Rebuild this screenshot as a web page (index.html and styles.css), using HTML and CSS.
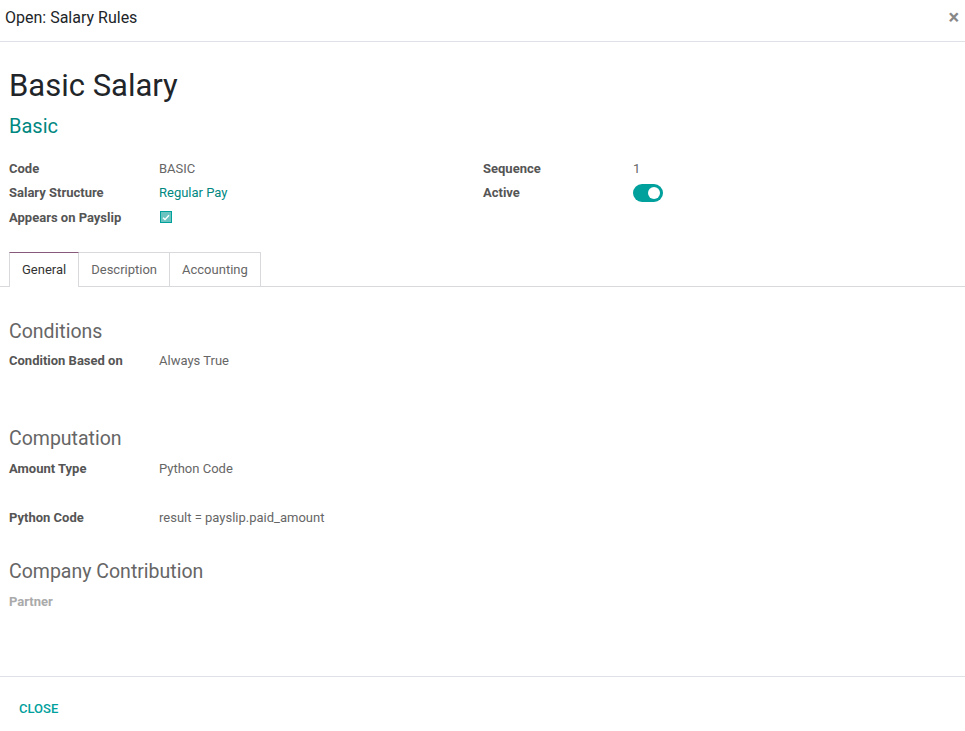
FILE: index.html
```html
<!DOCTYPE html>
<html>
<head>
<meta charset="utf-8">
<link rel="stylesheet" href="styles.css">
</head>
<body>
<div class="modal">
  <header class="modal-header">
    <h4 class="modal-title">Open: Salary Rules</h4>
    <span class="close">×</span>
  </header>
  <main class="modal-body">
    <h1 class="title">Basic Salary</h1>
    <div class="subtitle">Basic</div>
    <div class="groups">
      <div class="group">
        <div class="row"><span class="label">Code</span><span class="value">BASIC</span></div>
        <div class="row"><span class="label">Salary Structure</span><span class="value link">Regular Pay</span></div>
        <div class="row"><span class="label">Appears on Payslip</span><span class="value"><span class="checkbox"><svg width="8" height="7" viewBox="0 0 8 7"><path d="M1 3.8 L3 5.6 L7 1.2" fill="none" stroke="#fff" stroke-width="1.4"/></svg></span></span></div>
      </div>
      <div class="group">
        <div class="row"><span class="label">Sequence</span><span class="value">1</span></div>
        <div class="row"><span class="label">Active</span><span class="value"><span class="toggle"><span class="knob"></span></span></span></div>
      </div>
    </div>
    <nav class="tabs">
      <span class="tab active">General</span>
      <span class="tab">Description</span>
      <span class="tab">Accounting</span>
    </nav>
    <section class="section">
      <h2 class="section-title">Conditions</h2>
      <div class="row"><span class="label">Condition Based on</span><span class="value">Always True</span></div>
    </section>
    <section class="section s-comp">
      <h2 class="section-title">Computation</h2>
      <div class="row"><span class="label">Amount Type</span><span class="value">Python Code</span></div>
      <div class="row r-code"><span class="label">Python Code</span><span class="value">result = payslip.paid_amount</span></div>
    </section>
    <section class="section s-contrib">
      <h2 class="section-title">Company Contribution</h2>
      <div class="row"><span class="label muted">Partner</span><span class="value"></span></div>
    </section>
  </main>
  <footer class="modal-footer">
    <span class="btn-close">CLOSE</span>
  </footer>
</div>
</body>
</html>
```
FILE: styles.css
```css
html, body {
  margin: 0;
  padding: 0;
  background: #fff;
  font-family: Roboto, "Noto Sans", sans-serif;
  color: #666;
}
.modal {
  width: 965px;
  height: 731px;
  display: flex;
  flex-direction: column;
}
.modal-header {
  height: 42px;
  border-bottom: 1px solid #dee2e6;
  display: flex;
  align-items: center;
  justify-content: space-between;
  padding: 0 6px 0 5px;
  box-sizing: border-box;
}
.modal-title {
  margin: 0;
  font-size: 16px;
  font-weight: 400;
  color: #212529;
  position: relative;
  top: -3px;
}
.close {
  font-size: 20px;
  font-weight: 700;
  color: #888;
  position: relative;
  top: -4px;
}
.modal-body {
  flex: 1;
  padding: 0 0 0 9px;
}
.title {
  margin: 25px 0 0;
  font-size: 31px;
  font-weight: 400;
  line-height: 38px;
  color: #212529;
}
.subtitle {
  margin-top: 7px;
  font-size: 20px;
  line-height: 28px;
  color: #00877f;
}
.groups {
  display: flex;
  margin-top: 16px;
}
.group {
  width: 474px;
}
.row {
  display: flex;
  align-items: center;
  height: 24.5px;
  font-size: 13px;
}
.label {
  width: 150px;
  font-weight: 700;
  color: #555;
}
.label.muted {
  color: #aaa;
}
.value {
  color: #666;
  display: flex;
  align-items: center;
}
.value.link {
  color: #00877f;
}
.checkbox {
  width: 10px;
  height: 10px;
  border: 1px solid #00a09d;
  background: #6cc4c1;
  display: inline-flex;
  align-items: center;
  justify-content: center;
  margin-left: 1px;
}
.toggle {
  width: 30px;
  height: 18px;
  border-radius: 9px;
  background: #00a09d;
  display: inline-flex;
  align-items: center;
  justify-content: flex-end;
  padding-right: 3px;
  box-sizing: border-box;
  margin-top: 1px;
}
.knob {
  width: 12px;
  height: 12px;
  border-radius: 50%;
  background: #fff;
}
.tabs {
  display: flex;
  margin-top: 22px;
  margin-left: -9px;
  padding-left: 9px;
  border-bottom: 1px solid #d7d9dc;
  height: 34px;
}
.tab {
  height: 34px;
  box-sizing: border-box;
  padding: 0 12px;
  display: flex;
  align-items: center;
  font-size: 13px;
  color: #666;
  border: 1px solid #d7d9dc;
  border-left: none;
  border-bottom: none;
}
.tab:first-child {
  border-left: 1px solid #d7d9dc;
}
.tab.active {
  color: #333;
  border-top: 1px solid #875a7b;
  background: #fff;
  height: 35px;
}
.section-title {
  margin: 0;
  font-size: 19.5px;
  font-weight: 400;
  line-height: 28px;
  color: #666;
}
.section {
  margin-top: 31px;
}
.section .section-title {
  margin-bottom: 3px;
}
.s-comp {
  margin-top: 52px;
}
.r-code {
  margin-top: 25px;
}
.s-contrib {
  margin-top: 28px;
}
.modal-footer {
  height: 54px;
  border-top: 1px solid #dee2e6;
  display: flex;
  align-items: center;
  padding-left: 19px;
}
.btn-close {
  font-size: 13px;
  font-weight: 500;
  color: #00a09d;
  position: relative;
  top: 4px;
}
```
